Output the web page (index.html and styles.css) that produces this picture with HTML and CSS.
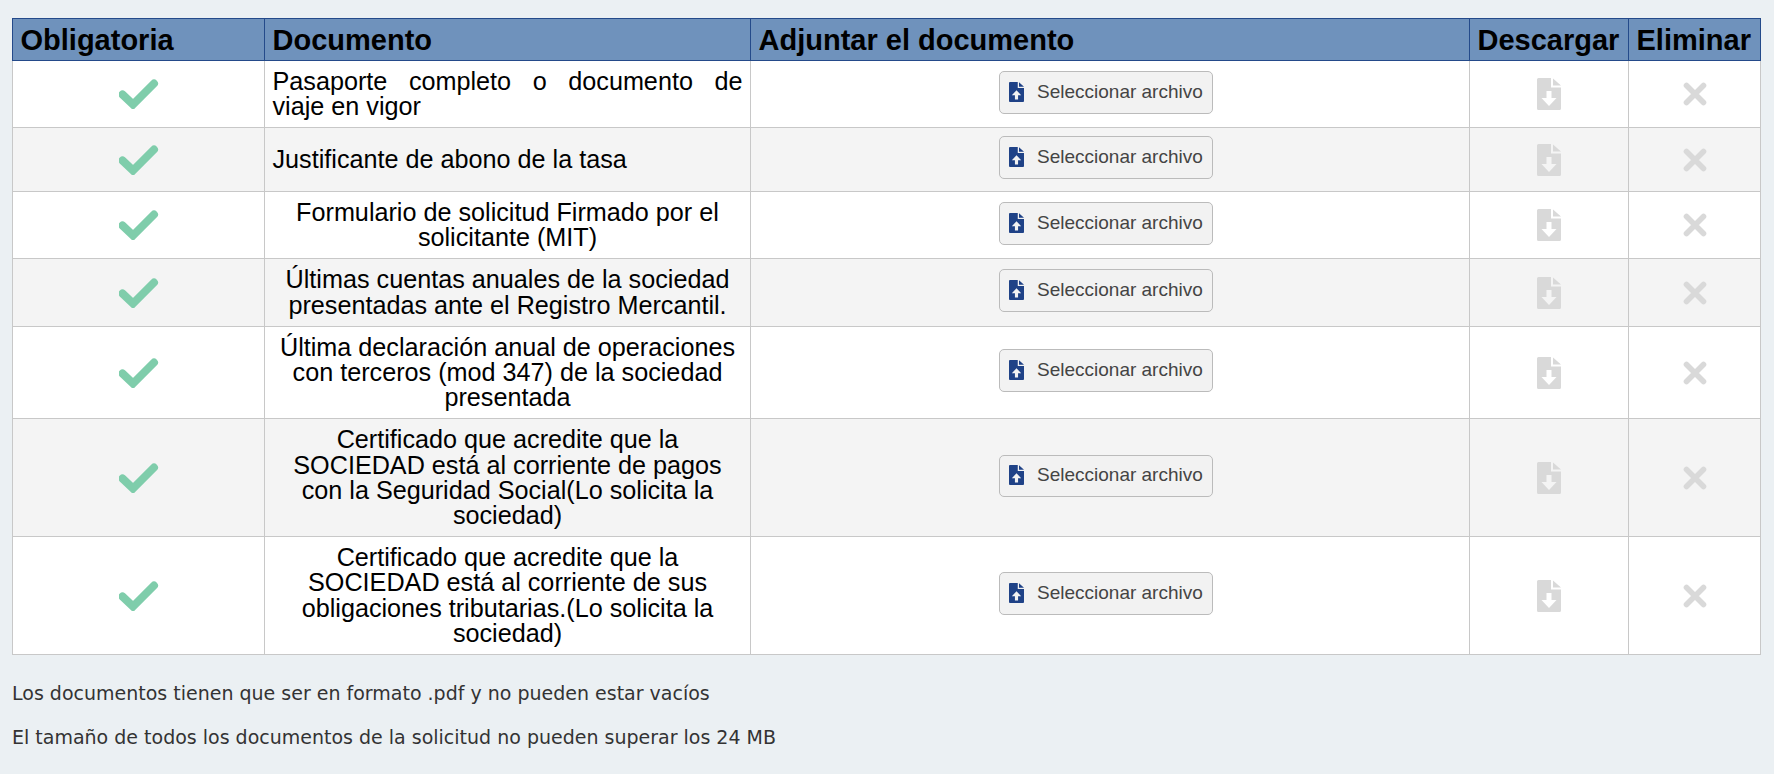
FILE: index.html
```html
<!DOCTYPE html>
<html lang="es">
<head>
<meta charset="utf-8">
<title>Documentos</title>
<link rel="stylesheet" href="styles.css">
</head>
<body>
<svg class="sprites" width="0" height="0" aria-hidden="true">
  <symbol id="i-check" viewBox="0 0 40 30"><path d="M3.500 15.500 L14 25.500 L35 4.500" fill="none" stroke="currentColor" stroke-width="8" stroke-linecap="round" stroke-linejoin="miter"/></symbol>
  <symbol id="i-x" viewBox="0 0 24 24"><path d="M3.500 3.500 L20.500 20.500 M20.500 3.500 L3.500 20.500" fill="none" stroke="currentColor" stroke-width="5.600" stroke-linecap="round"/></symbol>
  <symbol id="i-down" viewBox="0 0 24 32"><path fill="currentColor" fill-rule="evenodd" d="M1.500 0H14V9.500H24V30.500A1.500 1.500 0 0 1 22.500 32H1.500A1.500 1.500 0 0 1 0 30.500V1.500A1.500 1.500 0 0 1 1.500 0ZM9.500 13V20H4.500L12 28L19.500 20H14.500V13ZM16 0.500L24 7.500H16Z"/></symbol>
  <symbol id="i-up" viewBox="0 0 24 32"><path fill="currentColor" fill-rule="evenodd" d="M1.500 0H14V9.500H24V30.500A1.500 1.500 0 0 1 22.500 32H1.500A1.500 1.500 0 0 1 0 30.500V1.500A1.500 1.500 0 0 1 1.500 0ZM12 13L4.500 21H9.500V28H14.500V21H19.500ZM16 0.500L24 7.500H16Z"/></symbol>
</svg>
<table class="docs">
  <colgroup><col class="c1"><col class="c2"><col class="c3"><col class="c4"><col class="c5"></colgroup>
  <thead>
    <tr><th>Obligatoria</th><th>Documento</th><th>Adjuntar el documento</th><th>Descargar</th><th>Eliminar</th></tr>
  </thead>
  <tbody>
    <tr><td class="ico"><svg class="check"><use href="#i-check"/></svg></td><td class="just">Pasaporte completo o documento de viaje en vigor</td><td class="act"><button class="file"><svg class="up"><use href="#i-up"/></svg>Seleccionar archivo</button></td><td class="ico"><svg class="down"><use href="#i-down"/></svg></td><td class="ico"><svg class="del"><use href="#i-x"/></svg></td></tr>
    <tr><td class="ico"><svg class="check"><use href="#i-check"/></svg></td><td>Justificante de abono de la tasa</td><td class="act"><button class="file"><svg class="up"><use href="#i-up"/></svg>Seleccionar archivo</button></td><td class="ico"><svg class="down"><use href="#i-down"/></svg></td><td class="ico"><svg class="del"><use href="#i-x"/></svg></td></tr>
    <tr><td class="ico"><svg class="check"><use href="#i-check"/></svg></td><td class="ctr">Formulario de solicitud Firmado por el solicitante (MIT)</td><td class="act"><button class="file"><svg class="up"><use href="#i-up"/></svg>Seleccionar archivo</button></td><td class="ico"><svg class="down"><use href="#i-down"/></svg></td><td class="ico"><svg class="del"><use href="#i-x"/></svg></td></tr>
    <tr><td class="ico"><svg class="check"><use href="#i-check"/></svg></td><td class="ctr">Últimas cuentas anuales de la sociedad presentadas ante el Registro Mercantil.</td><td class="act"><button class="file"><svg class="up"><use href="#i-up"/></svg>Seleccionar archivo</button></td><td class="ico"><svg class="down"><use href="#i-down"/></svg></td><td class="ico"><svg class="del"><use href="#i-x"/></svg></td></tr>
    <tr><td class="ico"><svg class="check"><use href="#i-check"/></svg></td><td class="ctr">Última declaración anual de operaciones con terceros (mod 347) de la sociedad presentada</td><td class="act"><button class="file"><svg class="up"><use href="#i-up"/></svg>Seleccionar archivo</button></td><td class="ico"><svg class="down"><use href="#i-down"/></svg></td><td class="ico"><svg class="del"><use href="#i-x"/></svg></td></tr>
    <tr><td class="ico"><svg class="check"><use href="#i-check"/></svg></td><td class="ctr">Certificado que acredite que la SOCIEDAD está al corriente de pagos con la Seguridad Social(Lo solicita la sociedad)</td><td class="act"><button class="file"><svg class="up"><use href="#i-up"/></svg>Seleccionar archivo</button></td><td class="ico"><svg class="down"><use href="#i-down"/></svg></td><td class="ico"><svg class="del"><use href="#i-x"/></svg></td></tr>
    <tr><td class="ico"><svg class="check"><use href="#i-check"/></svg></td><td class="ctr">Certificado que acredite que la SOCIEDAD está al corriente de sus obligaciones tributarias.(Lo solicita la sociedad)</td><td class="act"><button class="file"><svg class="up"><use href="#i-up"/></svg>Seleccionar archivo</button></td><td class="ico"><svg class="down"><use href="#i-down"/></svg></td><td class="ico"><svg class="del"><use href="#i-x"/></svg></td></tr>
  </tbody>
</table>
<p class="note first">Los documentos tienen que ser en formato .pdf y no pueden estar vacíos</p>
<p class="note">El tamaño de todos los documentos de la solicitud no pueden superar los 24 MB</p>
</body>
</html>
```
FILE: styles.css
```css
html, body { margin: 0; padding: 0; }
body {
  background: #ebf0f3;
  padding: 18px 14px 0 12px;
  font-family: "Liberation Sans", Arial, sans-serif;
  color: #000;
  height: 756px;
  overflow: hidden;
}
.sprites { position: absolute; }
.docs {
  width: 1748px;
  table-layout: fixed;
  border-collapse: collapse;
  font-size: 25.200px;
  line-height: 25.200px;
}
.c1 { width: 252px; }
.c2 { width: 486px; }
.c3 { width: 719px; }
.c4 { width: 159px; }
.c5 { width: 132px; }
.docs th {
  background: #6f92bc;
  border: 1px solid #244a8a;
  font-size: 29px;
  line-height: 33px;
  font-weight: 700;
  text-align: left;
  padding: 5px 7px 3px 7.500px;
  white-space: nowrap;
}
.docs td {
  border: 1px solid #c8c8c8;
  background: #fff;
  padding: 8px 7.500px;
  vertical-align: middle;
}
.docs tbody tr:nth-child(even) td { background: #f4f4f4; }
.docs td.just { text-align: justify; }
.docs td.ctr { text-align: center; }
.docs td.ico { text-align: center; line-height: 0; }
.docs td.act { text-align: center; line-height: 0; padding: 8px 16px 12px 8px; }
.file {
  display: inline-flex;
  align-items: center;
  width: 214px;
  height: 42.600px;
  padding: 0 0 1px 9px;
  background: #f2f2f2;
  border: 1px solid #bbb;
  border-radius: 5px;
  color: #444;
  font-family: "Liberation Sans", Arial, sans-serif;
  font-size: 19px;
  line-height: 20px;
  box-sizing: border-box;
}
.up { width: 15px; height: 20px; color: #1f4287; margin-right: 13px; flex: none; }
.check { width: 40px; height: 30px; color: #7fcdab; }
.down { width: 24px; height: 32px; color: #d9d9d9; }
.del { width: 24px; height: 24px; color: #d9d9d9; }
.note {
  margin: 0;
  font-family: "DejaVu Sans", Verdana, sans-serif;
  font-size: 19px;
  line-height: 26px;
  color: #333;
  padding-top: 18px;
}
.note.first { padding-top: 25px; }
```
